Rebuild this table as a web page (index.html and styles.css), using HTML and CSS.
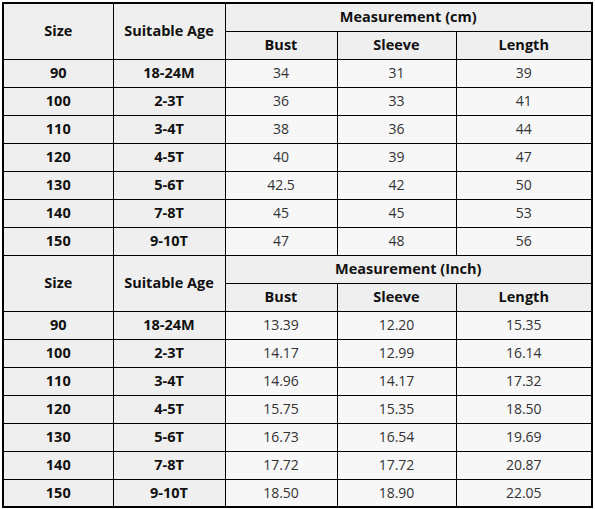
FILE: index.html
```html
<!DOCTYPE html>
<html lang="en">
<head>
    <meta charset="UTF-8">
    <meta name="viewport" content="width=device-width, initial-scale=1.0">
    <title>Size Chart</title>
    <link rel="stylesheet" href="styles.css">
</head>
<body>
    <table class="size-chart">
        <colgroup>
            <col class="c-size">
            <col class="c-age">
            <col class="c-bust">
            <col class="c-sleeve">
            <col class="c-length">
        </colgroup>
        <tbody>
            <tr>
                <th rowspan="2">Size</th>
                <th rowspan="2">Suitable Age</th>
                <th colspan="3">Measurement (cm)</th>
            </tr>
            <tr>
                <th>Bust</th>
                <th>Sleeve</th>
                <th>Length</th>
            </tr>
            <tr><th>90</th><th>18-24M</th><td>34</td><td>31</td><td>39</td></tr>
            <tr><th>100</th><th>2-3T</th><td>36</td><td>33</td><td>41</td></tr>
            <tr><th>110</th><th>3-4T</th><td>38</td><td>36</td><td>44</td></tr>
            <tr><th>120</th><th>4-5T</th><td>40</td><td>39</td><td>47</td></tr>
            <tr><th>130</th><th>5-6T</th><td>42.5</td><td>42</td><td>50</td></tr>
            <tr><th>140</th><th>7-8T</th><td>45</td><td>45</td><td>53</td></tr>
            <tr><th>150</th><th>9-10T</th><td>47</td><td>48</td><td>56</td></tr>
            <tr>
                <th rowspan="2">Size</th>
                <th rowspan="2">Suitable Age</th>
                <th colspan="3">Measurement (Inch)</th>
            </tr>
            <tr>
                <th>Bust</th>
                <th>Sleeve</th>
                <th>Length</th>
            </tr>
            <tr><th>90</th><th>18-24M</th><td>13.39</td><td>12.20</td><td>15.35</td></tr>
            <tr><th>100</th><th>2-3T</th><td>14.17</td><td>12.99</td><td>16.14</td></tr>
            <tr><th>110</th><th>3-4T</th><td>14.96</td><td>14.17</td><td>17.32</td></tr>
            <tr><th>120</th><th>4-5T</th><td>15.75</td><td>15.35</td><td>18.50</td></tr>
            <tr><th>130</th><th>5-6T</th><td>16.73</td><td>16.54</td><td>19.69</td></tr>
            <tr><th>140</th><th>7-8T</th><td>17.72</td><td>17.72</td><td>20.87</td></tr>
            <tr><th>150</th><th>9-10T</th><td>18.50</td><td>18.90</td><td>22.05</td></tr>
        </tbody>
    </table>
</body>
</html>
```

FILE: styles.css
```css
body {
    margin: 0;
    padding: 2px 0 0 2px;
    background: #ffffff;
    font-family: 'Open Sans', 'Noto Sans', sans-serif;
}
.size-chart {
    border-collapse: collapse;
    table-layout: fixed;
    width: 589px;
    border: 2px solid #000;
    background: #efefef;
}
.c-size { width: 110px; }
.c-age { width: 112px; }
.c-bust { width: 112px; }
.c-sleeve { width: 119px; }
.c-length { width: 136px; }
.size-chart tr {
    height: 28px;
}
.size-chart th,
.size-chart td {
    border: 1px solid #000;
    padding: 0;
    text-align: center;
    vertical-align: middle;
    line-height: 20px;
}
.size-chart th {
    font-size: 14.5px;
    font-weight: 700;
    color: #111;
}
.size-chart td {
    font-size: 14px;
    font-weight: 400;
    color: #333;
    background: #f7f7f7;
}
```
